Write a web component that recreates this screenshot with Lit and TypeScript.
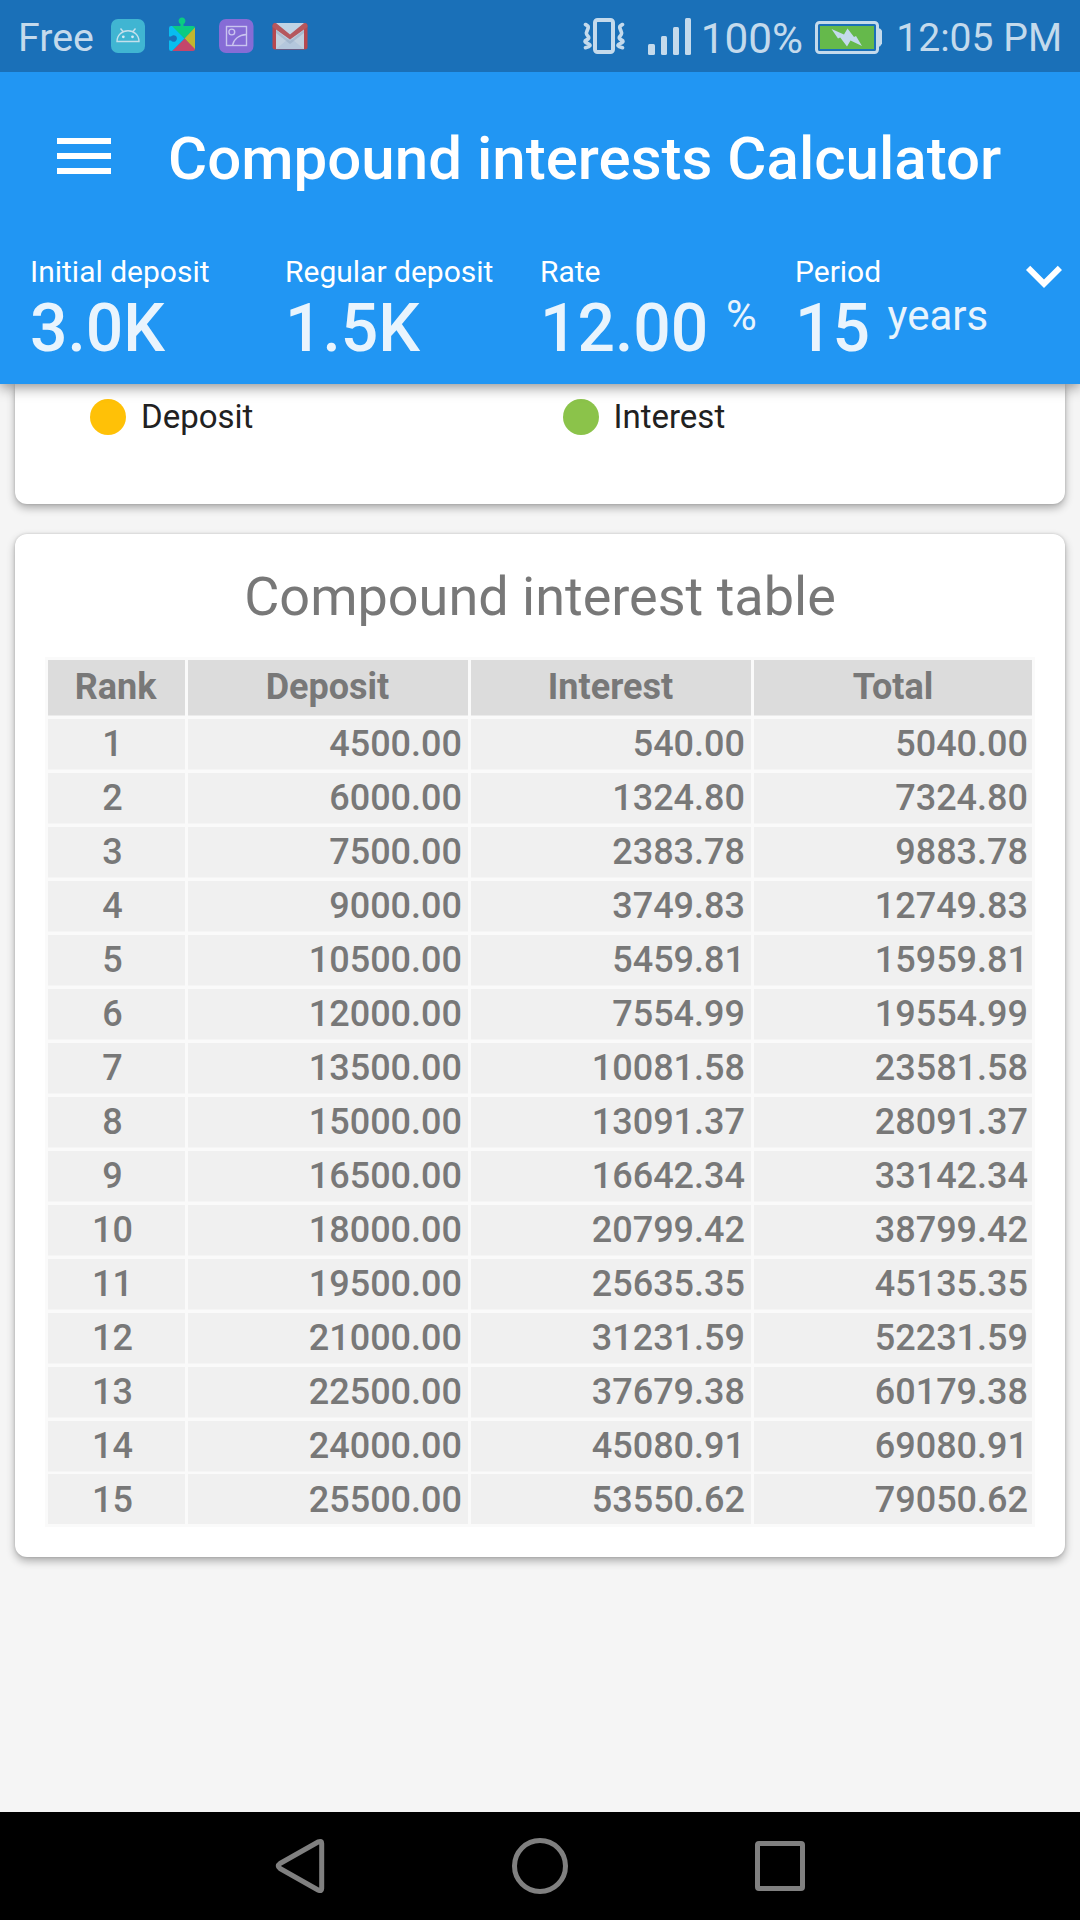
import { LitElement, html, css, svg } from "lit";
import { customElement, property } from "lit/decorators.js";

const rows: [number, string, string, string][] = [
  [1, "4500.00", "540.00", "5040.00"],
  [2, "6000.00", "1324.80", "7324.80"],
  [3, "7500.00", "2383.78", "9883.78"],
  [4, "9000.00", "3749.83", "12749.83"],
  [5, "10500.00", "5459.81", "15959.81"],
  [6, "12000.00", "7554.99", "19554.99"],
  [7, "13500.00", "10081.58", "23581.58"],
  [8, "15000.00", "13091.37", "28091.37"],
  [9, "16500.00", "16642.34", "33142.34"],
  [10, "18000.00", "20799.42", "38799.42"],
  [11, "19500.00", "25635.35", "45135.35"],
  [12, "21000.00", "31231.59", "52231.59"],
  [13, "22500.00", "37679.38", "60179.38"],
  [14, "24000.00", "45080.91", "69080.91"],
  [15, "25500.00", "53550.62", "79050.62"],
];

@customElement("status-bar")
class StatusBar extends LitElement {
  static styles = css`
    :host {
      display: flex;
      height: 72px;
      background: #1a70b8;
      color: #c4daec;
      font: 39.300px/77px Roboto, sans-serif;
      padding: 0 18px;
      box-sizing: border-box;
      white-space: nowrap;
    }
    svg { display: block; flex: none; }
    .carrier { width: 93px; }
    .percent { font-size: 42.300px; width: 114px; margin-left: 9px; }
    .right { display: flex; margin-left: auto; }
    .clock { margin-left: 13.500px; font-size: 39.100px; }
  `;
  render() {
    return html`
      <span class="carrier">Free</span>
      <svg width="200" height="72" viewBox="111 0 200 72">
        <rect x="111" y="19" width="34" height="34" rx="7" fill="#40b5d2" />
        <g fill="none" stroke="#c4e0ec" stroke-width="1.400">
          <path d="M117 41.500c0-6.500 5-10.700 11-10.700s11 4.200 11 10.700z" />
          <path d="M120.500 28.500l3 3.500M135.500 28.500l-3 3.500" />
        </g>
        <circle cx="123.300" cy="36.800" r="1.400" fill="#d5e9f3" /><circle cx="132.500" cy="36.800" r="1.400" fill="#d5e9f3" />

        <path d="M171 26h9.500v-2a3.400 3.400 0 1 1 3 0v2H193a2 2 0 0 1 2 2L184.500 38.500 170.500 26z" fill="#0acb82" />
        <path d="M195 27.500V50L184.500 38.500z" fill="#c2b62f" />
        <path d="M184.500 38.500L195 49a2 2 0 0 1-2 2h-21z" fill="#c4466b" />
        <path d="M184.500 38.500L172 51h-1a2 2 0 0 1-2-2v-8.500h2a3.300 3.300 0 1 0 0-4h-2V28a2 2 0 0 1 2-2h1z" fill="#08bdf0" />

        <rect x="219" y="19" width="34.500" height="34" rx="7" fill="#866cd6" />
        <g fill="none" stroke="#c9c4ef" stroke-width="1.400">
          <rect x="226.500" y="26.500" width="20" height="19" />
          <circle cx="231.800" cy="32" r="2.900" />
          <path d="M232.500 45.500c1-6 6-10.500 14-11" />
        </g>

        <rect x="272.500" y="23" width="35" height="26.500" rx="2.500" fill="#b6484f" />
        <path d="M276 24h28v25h-28z" fill="#c1d0df" />
        <path d="M276 49l14-11.500L304 49z" fill="#b4c7dc" />
        <path d="M276 30l14 11 14-11v3l-14 11-14-11z" fill="#8ea4bd" opacity=".45" />
        <path d="M275 23h30l-15 12z" fill="#c1d3e4" />
        <path d="M272.500 27c0-3 1.500-4 3.500-4l14 11.500L304 23c2 0 3.500 1 3.500 4l-17.500 12.500z" fill="#b5575d" />
      </svg>
      <div class="right">
        <svg width="109" height="72" viewBox="583 0 109 72">
          <rect x="595" y="20" width="18" height="32" rx="2.500" fill="none" stroke="#c4daec" stroke-width="4" />
          <path d="M585.500 24.500q3.500 1.500 2.500 4t-1.500 4 1.500 3.700-1.500 3.800 1.500 3.700-2.500 4M622.500 24.500q-3.500 1.500-2.500 4t1.500 4-1.500 3.700 1.500 3.800-1.500 3.700 2.500 4" fill="none" stroke="#c4daec" stroke-width="3.600" stroke-linecap="round" />
          <g fill="#c4daec">
            <rect x="648" y="44" width="7" height="11" rx="1.500" />
            <rect x="661" y="36" width="6" height="19" rx="1.500" />
            <rect x="673" y="27" width="6" height="28" rx="1.500" />
            <rect x="685" y="18" width="6" height="37" rx="1.500" />
          </g>
        </svg>
        <span class="percent">100%</span>
        <svg width="68" height="72" viewBox="815 0 68 72">
          <rect x="816.500" y="22.500" width="61" height="30" rx="3" fill="none" stroke="#c4daec" stroke-width="3" />
          <path d="M878 28.500h2l2 2v13l-2 3h-2z" fill="#c4daec" />
          <rect x="820" y="26" width="54" height="23" fill="#65b94b" />
          <path d="M831.500 29l12.500 5.500 3.500-6 6.500 8.500 2-1L862 46l-11.500-5.500-3.500 6-6.800-9-2.200 1z" fill="#c4daec" />
        </svg>
        <span class="clock">12:05 PM</span>
      </div>
    `;
  }
}

@customElement("app-header")
class AppHeader extends LitElement {
  static styles = css`
    :host {
      display: block;
      position: relative;
      z-index: 1;
      height: 312px;
      background: #2196f3;
      color: #fff;
      box-shadow: 0 3px 13px rgba(0, 0, 0, 0.45);
      clip-path: inset(0 0 -30px 0);
      font-family: Roboto, sans-serif;
      white-space: nowrap;
    }
    svg { display: block; flex: none; }
    .bar { display: flex; height: 168px; padding-left: 48px; align-items: center; }
    .title { margin: 0 0 0 48px; font-size: 60px; line-height: 60px; padding-top: 5px; font-weight: 500; letter-spacing: 0.020px; }
    .summary { display: grid; grid-template-columns: 255px 255px 255px 213px 72px; padding-left: 30px; }
    .item { padding-top: 14px; }
    .label { font-size: 30px; line-height: 36px; }
    .value { font-size: 66px; line-height: 78px; font-weight: 500; opacity: 0.9; }
    .unit { font-size: 42px; line-height: 0; font-weight: 400; vertical-align: 21.500px; margin-left: 17.500px; }
  `;
  render() {
    const item = (label: string, value: string, unit = "") => html`
      <div class="item">
        <div class="label">${label}</div>
        <div class="value">${value}${unit ? html`<span class="unit">${unit}</span>` : ""}</div>
      </div>`;
    return html`
      <div class="bar">
        <svg width="72" height="72" viewBox="0 0 24 24" fill="#fff"><path d="M3 18h18v-2H3zm0-5h18v-2H3zm0-7v2h18V6z" /></svg>
        <h1 class="title">Compound interests Calculator</h1>
      </div>
      <div class="summary">
        ${item("Initial deposit", "3.0K")}
        ${item("Regular deposit", "1.5K")}
        ${item("Rate", "12.00", "%")}
        ${item("Period", "15", "years")}
        <svg width="72" height="72" viewBox="0 0 24 24" fill="#fff"><path d="M16.590 8.590L12 13.170 7.410 8.590 6 10l6 6 6-6z" /></svg>
      </div>
    `;
  }
}

@customElement("legend-item")
class LegendItem extends LitElement {
  @property() label = "";
  @property() tone = "deposit";
  static styles = css`
    :host { display: flex; align-items: center; gap: 15px; height: 36px; }
    .dot { width: 36px; height: 36px; border-radius: 50%; }
    .deposit { background: #ffc107; }
    .interest { background: #8bc34a; }
    .label { font-size: 33px; line-height: 36px; color: #212121; }
  `;
  render() {
    return html`<span class="dot ${this.tone}"></span><span class="label">${this.label}</span>`;
  }
}

@customElement("interest-table")
class InterestTable extends LitElement {
  static styles = css`
    :host {
      display: block;
      background: #fafafa;
      padding: 3px;
      color: #787878;
      font-size: 36px;
      font-weight: 500;
    }
    .row { display: grid; grid-template-columns: 137px 280px 280px 278px; column-gap: 3px; margin-top: 3px; }
    .row:last-child { margin-top: 2px; }
    .cell { background: #f0f0f0; height: 50px; line-height: 51px; text-align: right; padding-right: 6px; border-bottom: 1px solid #f5f5f5; }
    .cell:first-child { text-align: center; padding: 0 8px 0 0; }
    .cell:last-child { padding-right: 4px; }
    .row:last-child .cell { border-bottom: 0; line-height: 52px; }
    .head { margin-top: 0; font-weight: 700; }
    .head .cell { background: #dcdcdc; border-color: #ebebeb; height: 55px; text-align: center; line-height: 54px; padding-right: 1px; }
    .head .cell:first-child { padding-right: 2px; }
    .head .cell:last-child { padding-right: 0; }
  `;
  render() {
    return html`
      <div class="row head">
        ${["Rank", "Deposit", "Interest", "Total"].map((t) => html`<div class="cell">${t}</div>`)}
      </div>
      ${rows.map((r) => html`<div class="row">${r.map((v) => html`<div class="cell">${v}</div>`)}</div>`)}
    `;
  }
}

@customElement("app-root")
class AppRoot extends LitElement {
  static styles = css`
    :host {
      display: flex;
      flex-direction: column;
      width: 1080px;
      height: 1920px;
      overflow: hidden;
      background: #f5f5f5;
      font-family: Roboto, sans-serif;
    }
    .content { flex: 1; padding: 0 15px; }
    .card { background: #fff; box-sizing: border-box; border-radius: 12px; box-shadow: 0 4px 8px rgba(0, 0, 0, 0.3), 0 0 3px rgba(0, 0, 0, 0.16); }
    .legend { height: 120px; border-radius: 0 0 12px 12px; padding: 15px 30px 0 75px; display: grid; grid-template-columns: 1fr 1fr; }
    .panel { height: 1023px; margin-top: 30px; padding: 27px 30px 0 30px; }
    .heading { margin: 0 0 24px; font-size: 54px; line-height: 72px; font-weight: 400; color: #787878; text-align: center; }
    .nav { display: block; background: #000; height: 108px; }
  `;
  render() {
    return html`
      <status-bar></status-bar>
      <app-header></app-header>
      <main class="content">
        <section class="card legend">
          <legend-item label="Deposit" tone="deposit"></legend-item>
          <legend-item label="Interest" tone="interest"></legend-item>
        </section>
        <section class="card panel">
          <h2 class="heading">Compound interest table</h2>
          <interest-table></interest-table>
        </section>
      </main>
      <svg class="nav" width="1080" height="108" viewBox="0 1812 1080 108" fill="none" stroke="#808080" stroke-width="5" stroke-linejoin="round">
        ${svg`<path d="M318.500 1841.800Q321.700 1840.500 321.700 1843.500V1888.500Q321.700 1891.500 318.500 1890.200L280 1868.500Q276.500 1866 280 1863.500Z" />
        <circle cx="540" cy="1866" r="25.500" />
        <rect x="757.500" y="1843.500" width="45" height="45" rx="1.500" />`}
      </svg>
    `;
  }
}
